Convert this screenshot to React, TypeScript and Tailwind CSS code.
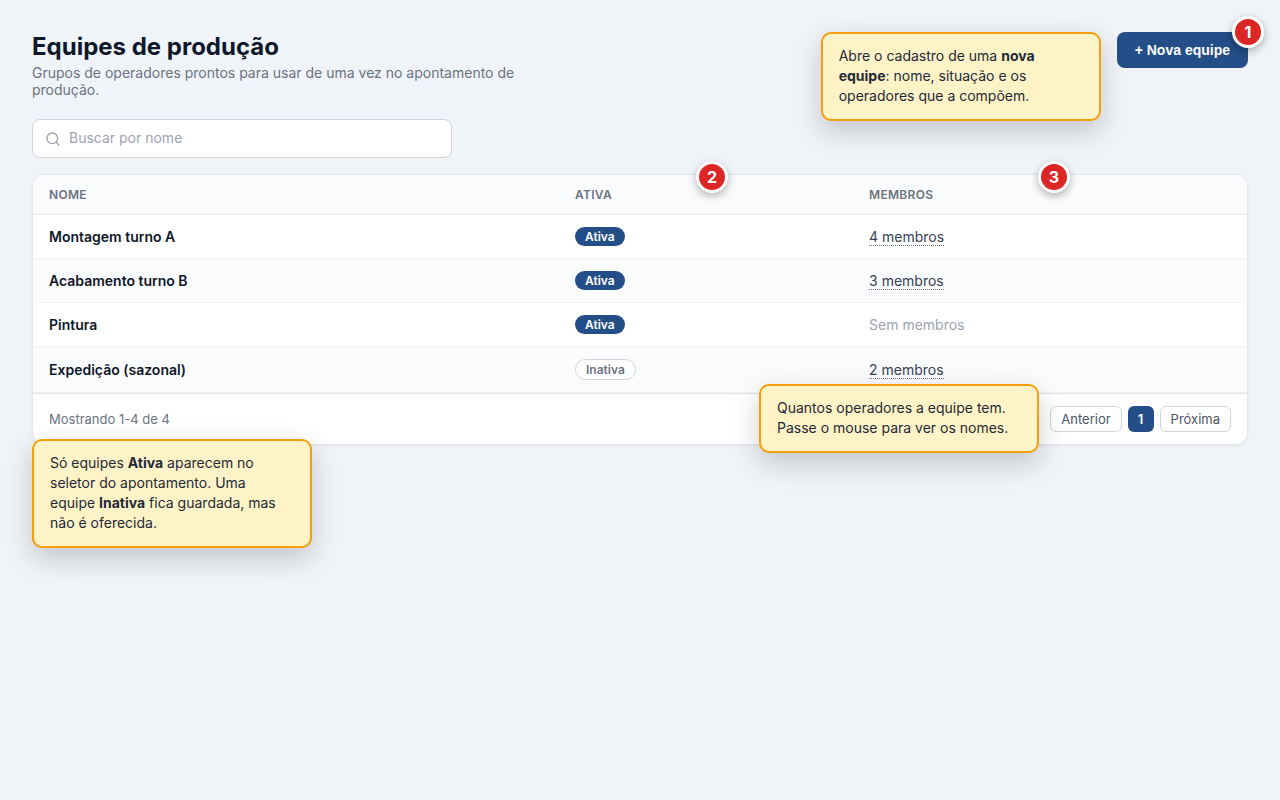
import React from "react";
import { Search } from "lucide-react";
import { clsx } from "clsx";

interface Team {
  id: number;
  name: string;
  active: boolean;
  members: string[];
}

const TEAMS: Team[] = [
  { id: 1, name: "Montagem turno A", active: true, members: ["Ana", "Bruno", "Carla", "Diego"] },
  { id: 2, name: "Acabamento turno B", active: true, members: ["Elisa", "Fábio", "Gabriela"] },
  { id: 3, name: "Pintura", active: true, members: [] },
  { id: 4, name: "Expedição (sazonal)", active: false, members: ["Hugo", "Irene"] },
];

function StatusBadge({ active }: { active: boolean }) {
  return (
    <span
      className={clsx(
        "block w-fit rounded-full px-[10px] py-[2px] text-[12px] leading-[15px] font-semibold",
        active ? "bg-[#234e87] text-white" : "border border-[#d1d5db] bg-white text-[#6b7280]",
      )}
    >
      {active ? "Ativa" : "Inativa"}
    </span>
  );
}

function MemberCount({ members }: { members: string[] }) {
  if (members.length === 0) {
    return <span className="text-[#9ca3af]">Sem membros</span>;
  }
  return (
    <span
      title={members.join(", ")}
      className="cursor-help border-b border-dotted border-[#6b7280] text-[#374151]"
    >
      {members.length} membros
    </span>
  );
}

// Numbered marker of the guided tour
function Marker({ step, className }: { step: number; className: string }) {
  return (
    <span
      className={clsx(
        "absolute z-20 flex size-8 items-center justify-center rounded-full border-3 border-white bg-[#dc2626] text-[16px] leading-5 font-bold text-white shadow-[0_3px_8px_rgba(0,0,0,0.3)]",
        className,
      )}
    >
      {step}
    </span>
  );
}

function Callout({ className, children }: { className: string; children: React.ReactNode }) {
  return (
    <div
      role="note"
      className={clsx(
        "absolute z-10 w-[280px] rounded-[10px] border-2 border-[#f59e0b] bg-[#fef3c7] px-4 pt-3 pb-[13px] text-[14px] leading-5 text-[#1f2937] shadow-[0_10px_28px_rgba(0,0,0,0.2)]",
        className,
      )}
    >
      {children}
    </div>
  );
}

function PageHeader() {
  return (
    <header className="flex items-start justify-between gap-4">
      <div className="max-w-[520px]">
        <h1 className="text-[24px] leading-[29px] font-bold text-[#0f172a]">Equipes de produção</h1>
        <p className="mt-[3px] text-[14px] leading-[17px] text-[#6b7280]">
          Grupos de operadores prontos para usar de uma vez no apontamento de produção.
        </p>
      </div>
      <div className="relative shrink-0">
        <button
          type="button"
          className="block rounded-lg bg-[#234e87] px-[18px] py-2 font-['Liberation_Sans',sans-serif] text-[14px] leading-5 font-semibold text-white"
        >
          + Nova equipe
        </button>
        <Marker step={1} className="-top-4 -right-4" />
        <Callout className="top-0 right-full mr-4">
          Abre o cadastro de uma <strong>nova equipe</strong>: nome, situação e os operadores que a compõem.
        </Callout>
      </div>
    </header>
  );
}

function SearchBox() {
  return (
    <label className="mt-[21px] flex w-full max-w-[420px] items-center gap-2 rounded-lg border border-[#d1d5db] bg-white px-3">
      <Search className="size-4 shrink-0 text-[#9ca3af]" strokeWidth={2} aria-hidden="true" />
      <input
        type="search"
        aria-label="Buscar por nome"
        placeholder="Buscar por nome"
        className="min-w-0 flex-1 bg-transparent pt-[9px] pb-[11px] text-[14px] leading-[17px] text-[#1f2937] outline-none placeholder:text-[#9ca3af]"
      />
    </label>
  );
}

function Pagination() {
  const button = "rounded-md border border-[#d1d5db] bg-white px-[10px] text-[#4b5563]";
  return (
    <nav aria-label="Paginação" className="flex gap-[6px] text-[13px] leading-6">
      <button type="button" className={button}>
        Anterior
      </button>
      <button
        type="button"
        aria-current="page"
        className="w-[26px] rounded-md bg-[#234e87] text-center font-semibold text-white"
      >
        1
      </button>
      <button type="button" className={button}>
        Próxima
      </button>
    </nav>
  );
}

function TeamsTable() {
  const th = "px-4 py-3 font-semibold";
  return (
    <div className="overflow-hidden rounded-xl border border-[#e5e7eb] bg-white shadow-[0_1px_3px_rgba(0,0,0,0.06)]">
      <table className="w-full table-fixed border-separate border-spacing-0 text-left">
        <colgroup>
          <col className="w-[43.33%]" />
          <col className="w-[24.22%]" />
          <col />
        </colgroup>
        <thead className="bg-[#fafbfd] text-[12px] leading-[15px] tracking-wide text-[#6b7280] uppercase">
          <tr className="*:border-b *:border-[#e2e5ea]">
            <th scope="col" className={th}>Nome</th>
            <th scope="col" className={th}>Ativa</th>
            <th scope="col" className={th}>Membros</th>
          </tr>
        </thead>
        <tbody className="text-[14px] leading-[18px]">
          {TEAMS.map((team) => (
            <tr
              key={team.id}
              className="even:bg-[#fafbfd] *:border-b *:border-[#f0f2f5] *:px-4 *:py-3"
            >
              <td className="font-semibold text-[#0f172a]">{team.name}</td>
              <td>
                <StatusBadge active={team.active} />
              </td>
              <td>
                <MemberCount members={team.members} />
              </td>
            </tr>
          ))}
        </tbody>
      </table>
      <div className="flex items-center justify-between border-t border-[#e2e5ea] px-4 py-3">
        <span className="text-[13px] leading-4 text-[#6b7280]">Mostrando 1-4 de 4</span>
        <Pagination />
      </div>
    </div>
  );
}

export default function App() {
  return (
    <main className="min-h-screen bg-[#f0f4f8] p-8 font-['Inter',sans-serif]">
      <PageHeader />
      <SearchBox />
      <section aria-label="Equipes" className="relative mt-4">
        <TeamsTable />
        <Marker step={2} className="-top-[13px] right-[520px]" />
        <Marker step={3} className="-top-[13px] right-[178px]" />
        <Callout className="top-[calc(100%-6px)] left-0">
          Só equipes <strong>Ativa</strong> aparecem no seletor do apontamento. Uma equipe{" "}
          <strong>Inativa</strong> fica guardada, mas não é oferecida.
        </Callout>
        <Callout className="right-[209px] -bottom-2">
          Quantos operadores a equipe tem. Passe o mouse para ver os nomes.
        </Callout>
      </section>
    </main>
  );
}
